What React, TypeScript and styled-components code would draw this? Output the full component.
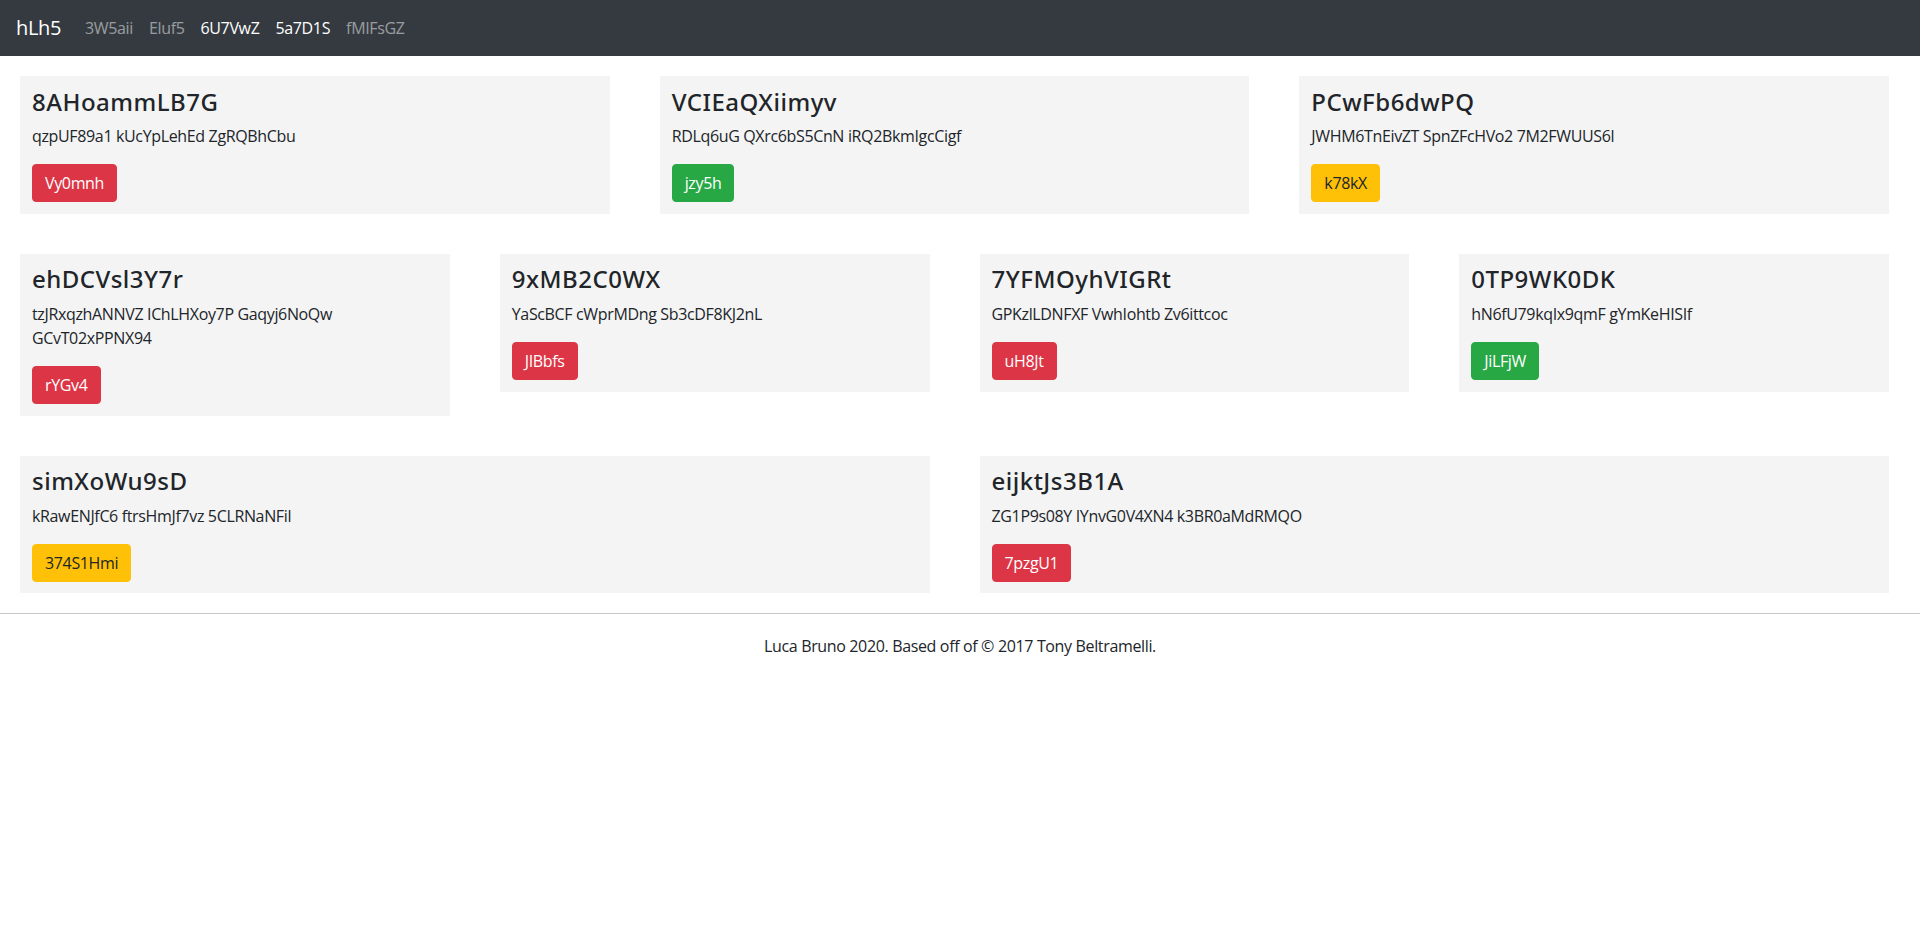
import React from "react";
import styled, { createGlobalStyle } from "styled-components";

const GlobalStyle = createGlobalStyle`
  html, body {
    margin: 0;
    padding: 0;
    background: #ffffff;
  }
  body {
    font-family: "Segoe UI", "Open Sans", "Noto Sans", sans-serif;
    font-size: 16px;
    line-height: 1.5;
    letter-spacing: -0.35px;
    color: #212529;
  }
  * { box-sizing: border-box; }
`;

const Navbar = styled.nav`
  display: flex;
  align-items: center;
  height: 56px;
  padding: 8px 16px;
  background: #343a40;
`;

const Brand = styled.span`
  font-size: 20px;
  line-height: 30px;
  padding: 5px 0;
  margin-right: 16px;
  color: #ffffff;
`;

const NavList = styled.div`
  display: flex;
  align-items: center;
`;

const NavLink = styled.span<{ $active?: boolean }>`
  padding: 8px;
  font-size: 16px;
  line-height: 24px;
  color: ${(p) => (p.$active ? "#ffffff" : "rgba(255, 255, 255, 0.5)")};
`;

const Main = styled.main`
  display: flex;
  flex-direction: column;
  gap: 40px;
  padding: 20px 31px 20px 20px;
`;

const Row = styled.div<{ $cols: number }>`
  display: grid;
  grid-template-columns: repeat(${(p) => p.$cols}, minmax(0, 1fr));
  column-gap: 50px;
  align-items: start;
`;

const Card = styled.div`
  background: #f4f4f4;
  padding: 11.5px 12px;
`;

const Title = styled.h4`
  margin: 0 0 8px;
  font-family: "Segoe UI", "Noto Sans", "Open Sans", sans-serif;
  font-size: 24px;
  font-weight: 500;
  letter-spacing: 0.5px;
  line-height: 1.2;
  color: #212529;
`;

const Text = styled.p`
  margin: 0 0 16px;
  font-size: 16px;
  line-height: 24px;
`;

type Variant = "red" | "green" | "yellow";

const palette: Record<Variant, { bg: string; fg: string }> = {
  red: { bg: "#dc3545", fg: "#ffffff" },
  green: { bg: "#28a745", fg: "#ffffff" },
  yellow: { bg: "#ffc107", fg: "#212529" },
};

const Button = styled.button<{ $variant: Variant }>`
  display: inline-block;
  padding: 6px 12px;
  font-family: inherit;
  font-size: 16px;
  letter-spacing: inherit;
  line-height: 24px;
  border-radius: 4px;
  border: 1px solid ${(p) => palette[p.$variant].bg};
  background: ${(p) => palette[p.$variant].bg};
  color: ${(p) => palette[p.$variant].fg};
  cursor: pointer;
`;

const Footer = styled.footer`
  border-top: 1px solid #c6c6c6;
  padding-top: 20px;
  text-align: center;
`;

const FooterText = styled.p`
  margin: 0;
  font-size: 16px;
  line-height: 24px;
  color: #212529;
`;

type CardData = { title: string; text: string; button: string; variant: Variant };

const rows: CardData[][] = [
  [
    { title: "8AHoammLB7G", text: "qzpUF89a1 kUcYpLehEd ZgRQBhCbu", button: "Vy0mnh", variant: "red" },
    { title: "VCIEaQXiimyv", text: "RDLq6uG QXrc6bS5CnN iRQ2BkmIgcCigf", button: "jzy5h", variant: "green" },
    { title: "PCwFb6dwPQ", text: "JWHM6TnEivZT SpnZFcHVo2 7M2FWUUS6l", button: "k78kX", variant: "yellow" },
  ],
  [
    { title: "ehDCVsl3Y7r", text: "tzJRxqzhANNVZ IChLHXoy7P Gaqyj6NoQw GCvT02xPPNX94", button: "rYGv4", variant: "red" },
    { title: "9xMB2C0WX", text: "YaScBCF cWprMDng Sb3cDF8KJ2nL", button: "JIBbfs", variant: "red" },
    { title: "7YFMOyhVIGRt", text: "GPKzlLDNFXF VwhIohtb Zv6ittcoc", button: "uH8Jt", variant: "red" },
    { title: "0TP9WK0DK", text: "hN6fU79kqIx9qmF gYmKeHISIf", button: "JiLFjW", variant: "green" },
  ],
  [
    { title: "simXoWu9sD", text: "kRawENJfC6 ftrsHmJf7vz 5CLRNaNFil", button: "374S1Hmi", variant: "yellow" },
    { title: "eijktJs3B1A", text: "ZG1P9s08Y IYnvG0V4XN4 k3BR0aMdRMQO", button: "7pzgU1", variant: "red" },
  ],
];

const links = [
  { label: "3W5aii", active: false },
  { label: "Eluf5", active: false },
  { label: "6U7VwZ", active: true },
  { label: "5a7D1S", active: true },
  { label: "fMIFsGZ", active: false },
];

export default function App() {
  return (
    <>
      <GlobalStyle />
      <Navbar>
        <Brand>hLh5</Brand>
        <NavList>
          {links.map((l) => (
            <NavLink key={l.label} $active={l.active}>
              {l.label}
            </NavLink>
          ))}
        </NavList>
      </Navbar>
      <Main>
        {rows.map((row, i) => (
          <Row key={i} $cols={row.length}>
            {row.map((c) => (
              <Card key={c.title}>
                <Title>{c.title}</Title>
                <Text>{c.text}</Text>
                <Button $variant={c.variant}>{c.button}</Button>
              </Card>
            ))}
          </Row>
        ))}
      </Main>
      <Footer>
        <FooterText>Luca Bruno 2020. Based off of © 2017 Tony Beltramelli.</FooterText>
      </Footer>
    </>
  );
}
